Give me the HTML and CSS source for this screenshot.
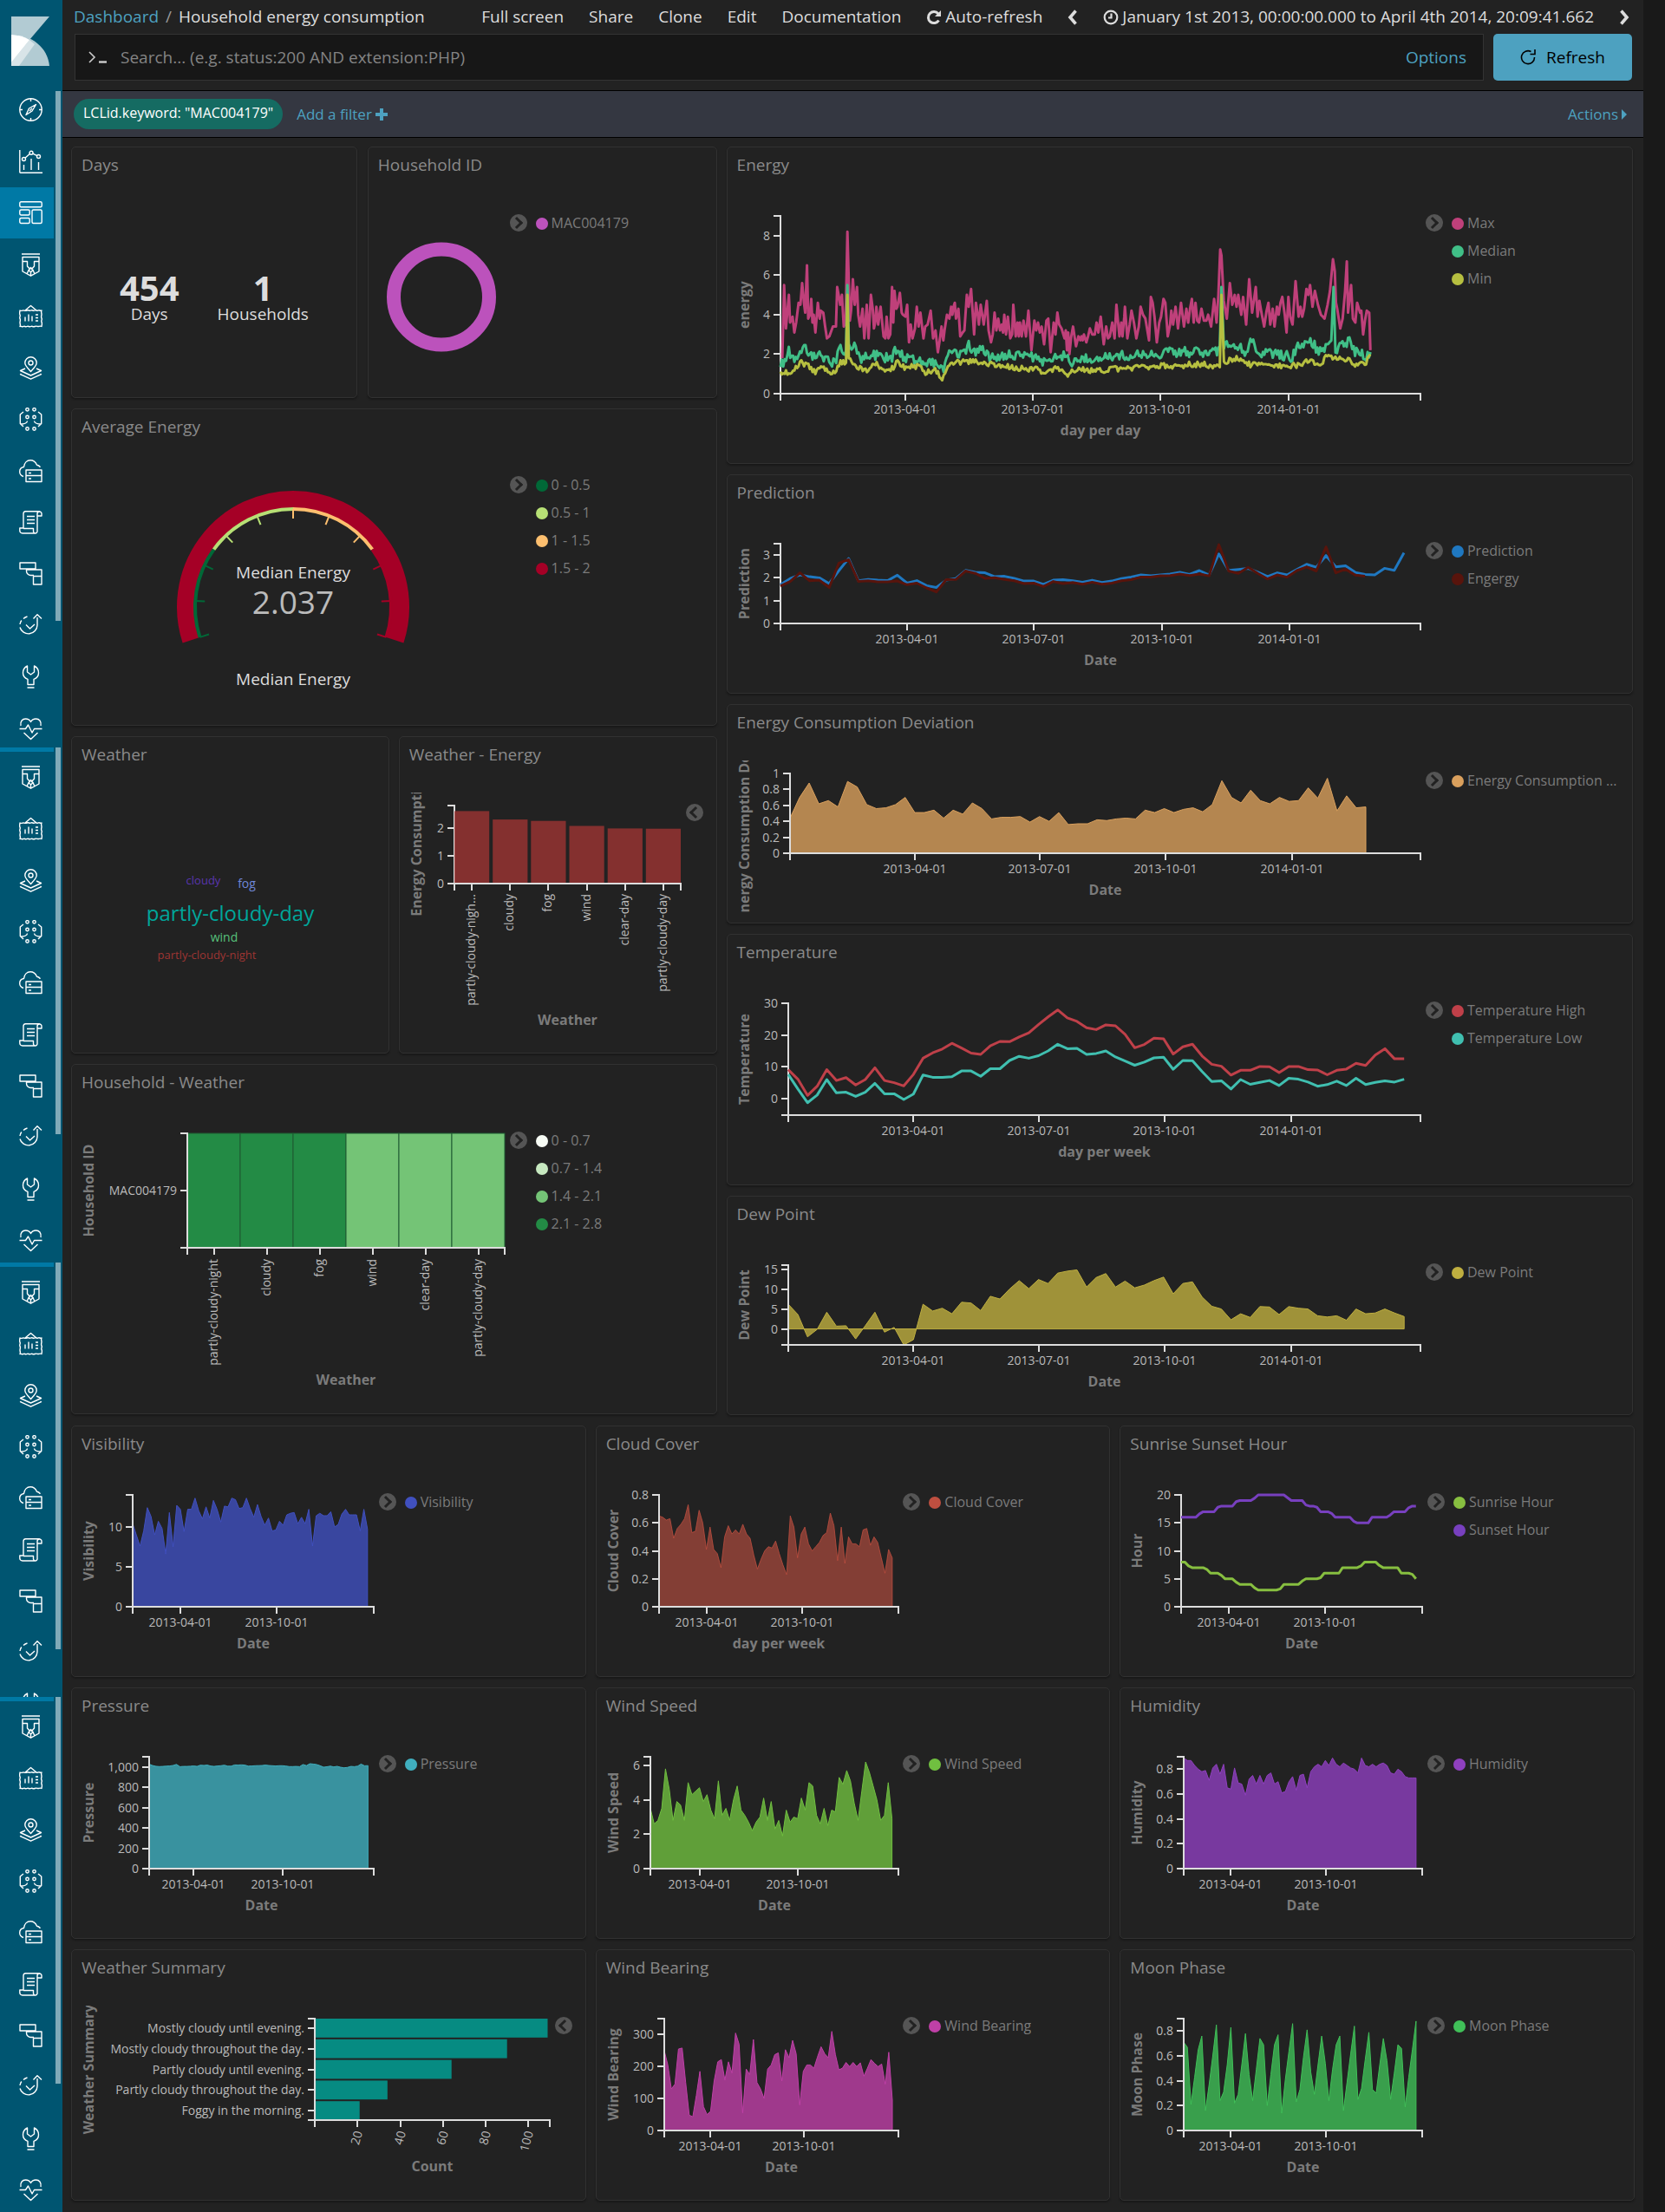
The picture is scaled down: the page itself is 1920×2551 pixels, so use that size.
FILE: index.html
```html
<!DOCTYPE html>
<html lang="en">
<head>
<meta charset="utf-8">
<title>Household energy consumption - Dashboard</title>
<meta name="viewport" content="width=device-width, initial-scale=1">
<link rel="stylesheet" href="styles.css">
</head>
<body>
<svg class="sprite" aria-hidden="true">
  <symbol id="i-discover" viewBox="0 0 27 27"><circle cx="13.5" cy="13.5" r="12.7"/><path d="M13.500 1v3M13.500 23v3M1 13.500h3M23 13.500h3M19.500 7.500l-8 4.500-3.500 7.500 7-4.500zM12 15l3-3"/></symbol>
  <symbol id="i-visualize" viewBox="0 0 27 27"><path d="M.8 0v25.500a.8.8 0 0 0 .8.8H27M5.500 17v6M14 10v13M22.500 14v9M7.200 9l5-4.500M15.800 4.200l5 2.500"/><circle cx="5.500" cy="10.500" r="2"/><circle cx="14" cy="3.300" r="2"/><circle cx="22.500" cy="7.500" r="2"/></symbol>
  <symbol id="i-dashboard" viewBox="0 0 27 27"><rect x=".8" y=".8" width="25.400" height="6" rx="1.500"/><rect x=".8" y="10" width="11.400" height="6" rx="1.500"/><rect x=".8" y="19.500" width="11.400" height="6" rx="1.500"/><rect x="15" y="10" width="11.200" height="15.500" rx="1.500"/></symbol>
  <symbol id="i-timelion" viewBox="0 0 27 27"><path d="M3 1h21M4 4.500h19V21l-9.500 5.200L4 21zM4 9.500h5.500V15l3.500 4M23 9.500h-5.500V15L14 19M13.500 16.500l-2.500 3 2.500 2.500 2.500-2.500zM11 19.500L9 24M16 19.500l2 4.500M13.500 22v4"/></symbol>
  <symbol id="i-canvas" viewBox="0 0 27 27"><path d="M1 7c1.500 1 3 0 4 0s2 1 4 0 3 1 4.500 0 3 1 4.500 0 3 1 4 0 3 1 4 0c-1 1.500 0 3 0 4.500s-1 3 0 4.500-1 3 0 4.500 0 3.500 0 5c-1.500-1-3 0-4 0s-2-1-4 0-3-1-4.500 0-3-1-4.500 0-3-1-4 0-3-1-4 0c1-1.500 0-3 0-4.500s1-3 0-4.500 1-3 0-4.500S1 8.500 1 7zM7 7l6.500-5.500L20 7M7 14.500v5M11 11.500v8M15 13.500v6M19 12h3M19 15.500h3M19 19h3"/></symbol>
  <symbol id="i-maps" viewBox="0 0 27 27"><path d="M13.500 17.500C9 12.500 6.800 10.500 6.800 7.500a6.700 6.700 0 0 1 13.400 0c0 3-2.200 5-6.700 10zM7 14l-5.500 2.500 12 5.500 12-5.500L20 14M2.500 20l-1 .7 12 5.500 12-5.500-1-.7"/><circle cx="13.500" cy="7.500" r="2.500"/></symbol>
  <symbol id="i-ml" viewBox="0 0 27 27"><circle cx="9.500" cy="2.300" r="1.700"/><circle cx="17.500" cy="2.300" r="1.700"/><circle cx="9.500" cy="11" r="1.700"/><circle cx="17.500" cy="11" r="1.700"/><circle cx="9.500" cy="24.500" r="1.700"/><circle cx="17.500" cy="24.500" r="1.700"/><path d="M5 5L1.300 8v10.500L5 22M22 5l3.700 3v10.500L22 22M1.300 19c4 0 8-.5 8.200-3.500M25.700 19c-4 0-8-.5-8.200-3.500"/></symbol>
  <symbol id="i-infra" viewBox="0 0 27 27"><path d="M5 19.500c-3-1-4.300-3-4.300-5.500 0-3 2-5 4.800-5.500C6 4 9 .8 13 .8c3.500 0 6 2 7.500 5.500 2 .2 3 1.200 4 2.500M8 12h18v6.500H8zM8 18.500h18V25.500H8zM11 15.500h3M11 22h3"/></symbol>
  <symbol id="i-logs" viewBox="0 0 27 27"><path d="M5 20V3.500A2.700 2.700 0 0 1 7.500.8H23.500M21 20V3.500a2.500 2.500 0 0 1 5 0V6H21M5 20H.8v3a3 3 0 0 0 3 3H19a2.500 2.500 0 0 1-2.500-3V20.500H5M19 26a2.500 2.500 0 0 0 2-3v-3M9 6.500h9M9 10.500h9M9 14.500h9"/></symbol>
  <symbol id="i-apm" viewBox="0 0 27 27"><path d="M1 1h18v7H1zM8.500 8v2.500a5 5 0 0 0 5 5H17M8.500 9H26v7.500h-9.500M26 16.500V26h-9.500v-9.500"/></symbol>
  <symbol id="i-uptime" viewBox="0 0 27 27"><path d="M8 12.500l4.500 4.500L18 12M21 4v9a10.200 10.200 0 0 1-20 2.500M1 12a10 10 0 0 1 1.800-4.500M5 5.500A10 10 0 0 1 9.500 3M16.500 5.500L21 .8l5 4.700"/></symbol>
  <symbol id="i-dev" viewBox="0 0 27 27"><path d="M9.500 26h8M10 22.500v-6.200C6.500 15 4.500 12.500 4.500 9c0-3.500 2-6.500 5-8v7l4 3 4-3V1c3 1.500 5 4.500 5 8 0 3.500-2 6-5.500 7.300v6.200z"/></symbol>
  <symbol id="i-monitor" viewBox="0 0 27 27"><path d="M.5 13.500h7l3-4.500 4.500 9 2.500-4.500h9M2 10C1 4.500 4 2 7.500 2c3 0 5 1.500 6 3.500 1-2 3-3.500 6-3.500C23 2 26 4.500 25 10M5.500 18l8 7.500 8-7.500"/></symbol>
</svg>

<div class="app">
  <aside class="sidebar">
    <a class="logo" href="#" aria-label="Home">
      <svg viewBox="0 0 44 57"><path fill="#b2cbd3" d="M0 0h44L21 27C15 23 8 21 0 21z"/><path fill="#b2cbd3" d="M0 21c24 0 42 15 44 36H0z"/><path fill="#d8e4e8" d="M21 27l6 5L9 57H0v-4z"/><path fill="#fff" d="M0 21c8 0 15 2 21 6L0 53z"/></svg>
    </a>
    <nav class="strip strip--first" aria-label="Main">
      <ul>
        <li><a href="#" aria-label="Discover"><svg><use href="#i-discover"/></svg></a></li>
        <li><a href="#" aria-label="Visualize"><svg><use href="#i-visualize"/></svg></a></li>
        <li class="active"><a href="#" aria-label="Dashboard"><svg><use href="#i-dashboard"/></svg></a></li>
        <li><a href="#" aria-label="Timelion"><svg><use href="#i-timelion"/></svg></a></li>
        <li><a href="#" aria-label="Canvas"><svg><use href="#i-canvas"/></svg></a></li>
        <li><a href="#" aria-label="Maps"><svg><use href="#i-maps"/></svg></a></li>
        <li><a href="#" aria-label="Machine Learning"><svg><use href="#i-ml"/></svg></a></li>
        <li><a href="#" aria-label="Infrastructure"><svg><use href="#i-infra"/></svg></a></li>
        <li><a href="#" aria-label="Logs"><svg><use href="#i-logs"/></svg></a></li>
        <li><a href="#" aria-label="APM"><svg><use href="#i-apm"/></svg></a></li>
        <li><a href="#" aria-label="Uptime"><svg><use href="#i-uptime"/></svg></a></li>
        <li><a href="#" aria-label="Dev Tools"><svg><use href="#i-dev"/></svg></a></li>
        <li><a href="#" aria-label="Monitoring"><svg><use href="#i-monitor"/></svg></a></li>
      </ul>
      <div class="scrollbar"></div>
    </nav>
    <nav class="strip strip--tall" aria-label="More, first part">
      <ul>
        <li><a href="#" aria-label="Timelion"><svg><use href="#i-timelion"/></svg></a></li>
        <li><a href="#" aria-label="Canvas"><svg><use href="#i-canvas"/></svg></a></li>
        <li><a href="#" aria-label="Maps"><svg><use href="#i-maps"/></svg></a></li>
        <li><a href="#" aria-label="Machine Learning"><svg><use href="#i-ml"/></svg></a></li>
        <li><a href="#" aria-label="Infrastructure"><svg><use href="#i-infra"/></svg></a></li>
        <li><a href="#" aria-label="Logs"><svg><use href="#i-logs"/></svg></a></li>
        <li><a href="#" aria-label="APM"><svg><use href="#i-apm"/></svg></a></li>
        <li><a href="#" aria-label="Uptime"><svg><use href="#i-uptime"/></svg></a></li>
        <li><a href="#" aria-label="Dev Tools"><svg><use href="#i-dev"/></svg></a></li>
        <li><a href="#" aria-label="Monitoring"><svg><use href="#i-monitor"/></svg></a></li>
      </ul>
      <div class="scrollbar"></div>
    </nav>
    <nav class="strip strip--short" aria-label="More, second part">
      <ul>
        <li><a href="#" aria-label="Timelion"><svg><use href="#i-timelion"/></svg></a></li>
        <li><a href="#" aria-label="Canvas"><svg><use href="#i-canvas"/></svg></a></li>
        <li><a href="#" aria-label="Maps"><svg><use href="#i-maps"/></svg></a></li>
        <li><a href="#" aria-label="Machine Learning"><svg><use href="#i-ml"/></svg></a></li>
        <li><a href="#" aria-label="Infrastructure"><svg><use href="#i-infra"/></svg></a></li>
        <li><a href="#" aria-label="Logs"><svg><use href="#i-logs"/></svg></a></li>
        <li><a href="#" aria-label="APM"><svg><use href="#i-apm"/></svg></a></li>
        <li><a href="#" aria-label="Uptime"><svg><use href="#i-uptime"/></svg></a></li>
        <li><a href="#" aria-label="Dev Tools"><svg><use href="#i-dev"/></svg></a></li>
        <li><a href="#" aria-label="Monitoring"><svg><use href="#i-monitor"/></svg></a></li>
      </ul>
      <div class="scrollbar"></div>
    </nav>
    <nav class="strip strip--tall" aria-label="More, third part">
      <ul>
        <li><a href="#" aria-label="Timelion"><svg><use href="#i-timelion"/></svg></a></li>
        <li><a href="#" aria-label="Canvas"><svg><use href="#i-canvas"/></svg></a></li>
        <li><a href="#" aria-label="Maps"><svg><use href="#i-maps"/></svg></a></li>
        <li><a href="#" aria-label="Machine Learning"><svg><use href="#i-ml"/></svg></a></li>
        <li><a href="#" aria-label="Infrastructure"><svg><use href="#i-infra"/></svg></a></li>
        <li><a href="#" aria-label="Logs"><svg><use href="#i-logs"/></svg></a></li>
        <li><a href="#" aria-label="APM"><svg><use href="#i-apm"/></svg></a></li>
        <li><a href="#" aria-label="Uptime"><svg><use href="#i-uptime"/></svg></a></li>
        <li><a href="#" aria-label="Dev Tools"><svg><use href="#i-dev"/></svg></a></li>
        <li><a href="#" aria-label="Monitoring"><svg><use href="#i-monitor"/></svg></a></li>
      </ul>
      <div class="scrollbar"></div>
    </nav>
  </aside>

  <main class="main">
    <header class="topbar">
      <nav class="crumbs" aria-label="Breadcrumb"><a href="#">Dashboard</a><span class="slash">/</span><span>Household energy consumption</span></nav>
      <div class="menu">
        <button type="button">Full screen</button>
        <button type="button">Share</button>
        <button type="button">Clone</button>
        <button type="button">Edit</button>
        <button type="button">Documentation</button>
        <button type="button"><svg class="ico" viewBox="0 0 18 18"><path class="thick" d="M14.500 12.500A6.500 6.500 0 1 1 14 5"/><path fill="currentColor" d="M17 1v7h-7z"/></svg>Auto-refresh</button>
        <button type="button" aria-label="Previous period"><svg class="chev" viewBox="0 0 12 18"><path d="M9.500 1.500L3 9l6.500 7.500"/></svg></button>
        <button type="button" class="range"><svg class="ico" viewBox="0 0 18 18"><circle cx="9" cy="9" r="7.300"/><path d="M9.500 4.500v5H6"/></svg>January 1st 2013, 00:00:00.000 to April 4th 2014, 20:09:41.662</button>
        <button type="button" aria-label="Next period"><svg class="chev" viewBox="0 0 12 18"><path d="M2.500 1.500L9 9l-6.500 7.500"/></svg></button>
      </div>
    </header>

    <form class="query">
      <div class="search">
        <label for="q" class="prompt" aria-label="Query"><svg viewBox="0 0 22 16"><path d="M1 2l6 6-6 6"/><path class="under" d="M12 13.500h9"/></svg></label>
        <input id="q" type="text" placeholder="Search... (e.g. status:200 AND extension:PHP)">
        <a href="#">Options</a>
      </div>
      <button type="submit" class="refresh"><svg viewBox="0 0 18 20"><path d="M12.500 3.500A7.500 7.500 0 1 0 16.500 10M17 1v5.500h-5.500"/></svg>Refresh</button>
    </form>

    <div class="filters">
      <span class="pill">LCLid.keyword: "MAC004179"</span>
      <a href="#" class="add">Add a filter<svg viewBox="0 0 14 14"><path d="M5 0h4v5h5v4H9v5H5V9H0V5h5z"/></svg></a>
      <a href="#" class="actions">Actions<svg viewBox="0 0 6 12"><path d="M0 0l6 6-6 6z"/></svg></a>
    </div>

    <div class="dashboard">
      <div class="top">
        <div class="col">
          <div class="pair pair--narrow">
            <section class="panel u8"><h2>Days</h2>
              <div class="metrics"><div><strong>454</strong>Days</div><div><strong>1</strong>Households</div></div>
            </section>
            <section class="panel u8"><h2>Household ID</h2>
              <div class="body"><div class="chart" data-chart="household"></div>
                <div class="legend"><button type="button" class="toggle" aria-label="Hide legend"></button><ul><li class="s-household">MAC004179</li></ul></div></div>
            </section>
          </div>
          <section class="panel u10"><h2>Average Energy</h2>
            <div class="body"><div class="chart" data-chart="gauge"></div>
              <div class="legend"><button type="button" class="toggle" aria-label="Hide legend"></button><ul><li class="s-g1">0 - 0.5</li><li class="s-g2">0.5 - 1</li><li class="s-g3">1 - 1.5</li><li class="s-g4">1.5 - 2</li></ul></div></div>
          </section>
          <div class="pair">
            <section class="panel u10"><h2>Weather</h2>
              <div class="body"><div class="chart" data-chart="cloud"></div></div>
            </section>
            <section class="panel u10"><h2>Weather - Energy</h2>
              <div class="body"><div class="chart" data-chart="weatherEnergy"></div>
                <div class="legend legend--closed"><button type="button" class="toggle toggle--closed" aria-label="Show legend"></button></div></div>
            </section>
          </div>
          <section class="panel u11"><h2>Household - Weather</h2>
            <div class="body"><div class="chart" data-chart="heatmap"></div>
              <div class="legend"><button type="button" class="toggle" aria-label="Hide legend"></button><ul><li class="s-h1">0 - 0.7</li><li class="s-h2">0.7 - 1.4</li><li class="s-h3">1.4 - 2.1</li><li class="s-h4">2.1 - 2.8</li></ul></div></div>
          </section>
        </div>
        <div class="col">
          <section class="panel u10"><h2>Energy</h2>
            <div class="body"><div class="chart" data-chart="energy"></div>
              <div class="legend"><button type="button" class="toggle" aria-label="Hide legend"></button><ul><li class="s-max">Max</li><li class="s-median">Median</li><li class="s-min">Min</li></ul></div></div>
          </section>
          <section class="panel u7"><h2>Prediction</h2>
            <div class="body"><div class="chart" data-chart="prediction"></div>
              <div class="legend"><button type="button" class="toggle" aria-label="Hide legend"></button><ul><li class="s-prediction">Prediction</li><li class="s-actual">Engergy</li></ul></div></div>
          </section>
          <section class="panel u7"><h2>Energy Consumption Deviation</h2>
            <div class="body"><div class="chart" data-chart="deviation"></div>
              <div class="legend"><button type="button" class="toggle" aria-label="Hide legend"></button><ul><li class="s-deviation">Energy Consumption Deviation</li></ul></div></div>
          </section>
          <section class="panel u8"><h2>Temperature</h2>
            <div class="body"><div class="chart" data-chart="temperature"></div>
              <div class="legend"><button type="button" class="toggle" aria-label="Hide legend"></button><ul><li class="s-high">Temperature High</li><li class="s-low">Temperature Low</li></ul></div></div>
          </section>
          <section class="panel u7"><h2>Dew Point</h2>
            <div class="body"><div class="chart" data-chart="dew"></div>
              <div class="legend"><button type="button" class="toggle" aria-label="Hide legend"></button><ul><li class="s-dew">Dew Point</li></ul></div></div>
          </section>
        </div>
      </div>
      <div class="thirds">
        <section class="panel u8"><h2>Visibility</h2>
          <div class="body"><div class="chart" data-chart="visibility"></div>
            <div class="legend"><button type="button" class="toggle" aria-label="Hide legend"></button><ul><li class="s-visibility">Visibility</li></ul></div></div>
        </section>
        <section class="panel u8"><h2>Cloud Cover</h2>
          <div class="body"><div class="chart" data-chart="cover"></div>
            <div class="legend"><button type="button" class="toggle" aria-label="Hide legend"></button><ul><li class="s-cover">Cloud Cover</li></ul></div></div>
        </section>
        <section class="panel u8"><h2>Sunrise Sunset Hour</h2>
          <div class="body"><div class="chart" data-chart="sun"></div>
            <div class="legend"><button type="button" class="toggle" aria-label="Hide legend"></button><ul><li class="s-sunrise">Sunrise Hour</li><li class="s-sunset">Sunset Hour</li></ul></div></div>
        </section>
        <section class="panel u8"><h2>Pressure</h2>
          <div class="body"><div class="chart" data-chart="pressure"></div>
            <div class="legend"><button type="button" class="toggle" aria-label="Hide legend"></button><ul><li class="s-pressure">Pressure</li></ul></div></div>
        </section>
        <section class="panel u8"><h2>Wind Speed</h2>
          <div class="body"><div class="chart" data-chart="wind"></div>
            <div class="legend"><button type="button" class="toggle" aria-label="Hide legend"></button><ul><li class="s-wind">Wind Speed</li></ul></div></div>
        </section>
        <section class="panel u8"><h2>Humidity</h2>
          <div class="body"><div class="chart" data-chart="humidity"></div>
            <div class="legend"><button type="button" class="toggle" aria-label="Hide legend"></button><ul><li class="s-humidity">Humidity</li></ul></div></div>
        </section>
        <section class="panel u8"><h2>Weather Summary</h2>
          <div class="body"><div class="chart" data-chart="summary"></div>
            <div class="legend legend--closed"><button type="button" class="toggle toggle--closed" aria-label="Show legend"></button></div></div>
        </section>
        <section class="panel u8"><h2>Wind Bearing</h2>
          <div class="body"><div class="chart" data-chart="bearing"></div>
            <div class="legend"><button type="button" class="toggle" aria-label="Hide legend"></button><ul><li class="s-bearing">Wind Bearing</li></ul></div></div>
        </section>
        <section class="panel u8"><h2>Moon Phase</h2>
          <div class="body"><div class="chart" data-chart="moon"></div>
            <div class="legend"><button type="button" class="toggle" aria-label="Hide legend"></button><ul><li class="s-moon">Moon Phase</li></ul></div></div>
        </section>
      </div>
    </div>
  </main>
</div>
<script src="charts.js"></script>
</body>
</html>
```

FILE: styles.css
```css
* { box-sizing: border-box; }

body {
  margin: 0;
  background: #191919;
  color: #ddd;
  font-family: "Open Sans", "Noto Sans", sans-serif;
  font-size: 19px;
}

a { color: #4da1c0; text-decoration: none; }

button {
  margin: 0;
  padding: 0;
  border: 0;
  background: none;
  color: inherit;
  font: inherit;
  cursor: pointer;
}

ul { margin: 0; padding: 0; list-style: none; }

.sprite { display: none; }

.app { display: flex; align-items: stretch; padding-right: 25px; }

/* Sidebar */
.sidebar { flex: none; width: 72px; background: #005571; overflow: hidden; }

.logo { display: block; height: 97px; padding: 19px 0 0 13px; }
.logo svg { display: block; width: 44px; height: 57px; }

.strip { display: flex; gap: 2px; overflow: hidden; }
.strip ul { width: 62px; display: flex; flex-direction: column; flex: none; }
.strip li { flex: 1; }
.strip li.active { background: #0079a5; }
.strip a { display: flex; align-items: center; justify-content: center; height: 100%; padding-left: 9px; }
.strip svg {
  width: 27px;
  height: 27px;
  fill: none;
  stroke: #fff;
  stroke-width: 1.4;
  stroke-linejoin: round;
}

.scrollbar { width: 6px; height: 446px; background: #80aab8; }

.strip--first { height: 765px; }
.strip--first ul { height: 773px; }
.strip--first .scrollbar { height: 611px; margin: 8px 0 0; }

.strip--tall { height: 594px; }
.strip--short { height: 501px; }
.strip--tall ul, .strip--short ul { height: 598px; border-top: 5px solid #0079a5; }

/* Header */
.main { flex: 1; min-width: 0; background: #222; }

.topbar {
  display: flex;
  justify-content: space-between;
  height: 39px;
  padding: 0 16px 0 13px;
  line-height: 39px;
  white-space: nowrap;
}

.slash { margin: 0 8px; color: #999; }

.menu { display: flex; gap: 29px; }
.menu button { display: flex; align-items: center; gap: 4px; }
.menu svg { fill: none; stroke: currentColor; stroke-width: 2.2; }
.menu .ico { width: 18px; height: 18px; }
.menu .thick { stroke-width: 3; }
.menu .ico [fill] { stroke: none; }
.menu .chev { width: 12px; height: 18px; stroke-width: 3.6; }

.query { display: flex; gap: 11px; height: 65px; padding: 0 13px 11px 14px; }

.search {
  flex: 1;
  display: flex;
  align-items: center;
  padding: 0 19px 0 15px;
  border: 1px solid #333;
  background: #171717;
}

.prompt svg { display: block; width: 22px; height: 16px; fill: none; stroke: #ccc; stroke-width: 1.6; }
.prompt .under { stroke-width: 2.4; }

.search input {
  flex: 1;
  min-width: 0;
  height: 100%;
  margin-left: 15px;
  padding: 0;
  border: 0;
  outline: 0;
  background: none;
  color: #ddd;
  font: inherit;
}
.search input::placeholder { color: #848484; opacity: 1; }

.refresh {
  display: flex;
  align-items: center;
  justify-content: center;
  gap: 12px;
  width: 160px;
  border-radius: 5px;
  background: #4da1c0;
  color: #000;
}
.refresh svg { width: 18px; height: 20px; fill: none; stroke: #000; stroke-width: 1.6; }

.filters {
  display: flex;
  align-items: center;
  height: 55px;
  padding: 0 19px 0 13px;
  border: solid #000;
  border-width: 1px 0;
  background: #343741;
  font-size: 17px;
}
.filters a { display: flex; align-items: center; gap: 4px; }
.filters svg { fill: currentColor; }

.pill {
  height: 35px;
  padding: 0 11px;
  border-radius: 18px;
  background: #156b62;
  color: #fff;
  font-size: 16px;
  line-height: 33px;
}
.add { margin-left: 16px; }
.add svg { width: 14px; height: 14px; }
.actions { margin-left: auto; }
.actions svg { width: 6px; height: 12px; }

/* Panel grid */
.dashboard { display: grid; gap: 12px; padding: 10px 10px 11px; }
.top { display: grid; grid-template-columns: 745fr 1046fr; gap: 11px; margin-right: 2px; }
.col { display: grid; gap: 12px; align-content: start; min-width: 0; }
.pair { display: grid; grid-template-columns: 1fr 1fr; gap: 11px; }
.pair--narrow { grid-template-columns: 330fr 403fr; gap: 12px; }
.thirds { display: grid; grid-template-columns: repeat(3, 1fr); gap: 12px 11px; }

.panel {
  display: flex;
  flex-direction: column;
  min-width: 0;
  padding: 0 11px 11px;
  border: 1px solid #313131;
  border-radius: 5px;
  background: #222;
  box-shadow: 0 2px 2px #191919;
}
.u7 { min-height: 253px; }
.u8 { min-height: 290px; }
.u10 { min-height: 366px; }
.u11 { min-height: 404px; }

.panel h2 {
  flex: none;
  height: 64px;
  margin: 0;
  padding-top: 7px;
  color: #8a8a8a;
  font-size: 19px;
  font-weight: 400;
  line-height: 26px;
}

.body { flex: 1; display: flex; min-height: 0; }
.chart { flex: 1; min-width: 0; overflow: hidden; position: relative; }
.chart svg { position: absolute; display: block; }

.metrics {
  flex: 1;
  display: flex;
  align-items: center;
  justify-content: center;
  gap: 44px;
  padding-top: 7px;
  text-align: center;
  line-height: 24px;
}
.metrics strong { display: block; font-size: 40px; line-height: 36px; }

/* Legend */
.legend { flex: none; width: 227px; display: flex; align-items: flex-start; gap: 10px; padding-top: 13px; }
.legend--closed { width: 24px; }
.toggle {
  flex: none;
  display: grid;
  place-items: center;
  width: 20px;
  height: 20px;
  border-radius: 50%;
  background: #555;
}
.toggle::before {
  content: "";
  width: 7px;
  height: 7px;
  margin-right: 3px;
  border: solid #222;
  border-width: 3px 3px 0 0;
  transform: rotate(45deg);
}
.toggle--closed::before { margin: 0 0 0 3px; transform: rotate(225deg); }
.legend ul { display: grid; gap: 12px; min-width: 0; font-size: 16px; line-height: 20px; }
.legend li { overflow: hidden; white-space: nowrap; text-overflow: ellipsis; -webkit-text-fill-color: #7b7b7b; }
.legend li::before {
  content: "";
  display: inline-block;
  width: 14px;
  height: 14px;
  margin-right: 4px;
  border-radius: 50%;
  background: currentColor;
  vertical-align: -2px;
}

/* Charts */
.axis { fill: none; stroke: #ddd; stroke-width: 2; shape-rendering: crispEdges; }
.tick { fill: #bbb; font-size: 14px; }
.title { fill: #7b7b7b; font-size: 16px; font-weight: 700; }
.line { fill: none; stroke: currentColor; stroke-width: 2; stroke-linejoin: round; }
.thin { stroke-width: 1.5; }
.wide { stroke-width: 3; }
.area { fill: currentColor; fill-opacity: .8; stroke: currentColor; stroke-width: 1; }
.s-cover .area, .area.s-cover { fill-opacity: .62; stroke-opacity: .8; }
.bar { fill: currentColor; fill-opacity: .8; }
.fill { fill: currentColor; }
.cell-edge { stroke: #1f5a33; stroke-width: 1; }
.label { fill: #ddd; font-size: 19px; }
.value { fill: #bbb; font-size: 37px; }
.word { fill: currentColor; font-size: 13px; }
.word--main { font-size: 24px; }
.word--mid { font-size: 14px; }

.s-household { color: #bc52bc; }
.s-g1 { color: #006837; }
.s-g2 { color: #b7e075; }
.s-g3 { color: #fdbf6f; }
.s-g4 { color: #a50026; }
.s-h1 { color: #f7fcf5; }
.s-h2 { color: #c7e9c0; }
.s-h3 { color: #74c476; }
.s-h4 { color: #238b45; }
.s-max { color: #bf407a; }
.s-median { color: #40bf87; }
.s-min { color: #b6bf40; }
.s-prediction { color: #1f78c1; }
.s-actual { color: #58140c; }
.s-deviation { color: #daa05d; }
.s-high { color: #bf4049; }
.s-low { color: #40bfb0; }
.s-dew { color: #bfaf40; }
.s-visibility { color: #4050bf; }
.s-cover { color: #bf4f40; }
.s-sunrise { color: #87bf40; }
.s-sunset { color: #7840bf; }
.s-pressure { color: #40afbf; }
.s-wind { color: #70bf40; }
.s-humidity { color: #8f40bf; }
.s-bearing { color: #bf40a7; }
.s-moon { color: #40bf58; }
.s-weather { color: #9e3533; }
.s-summary { color: #00a69b; }
.s-violet { color: #5a35b0; }
.s-blue { color: #6f87d8; }
.s-teal { color: #00a69b; }
.s-green { color: #57c17b; }
.s-red { color: #9e3533; }
```

FILE: charts.js
```javascript
(function () {
  var NS = 'http://www.w3.org/2000/svg';
  var SPAN = 459.84; // days on the time axis

  function el(parent, name, attrs, text) {
    var n = document.createElementNS(NS, name);
    for (var k in attrs) n.setAttribute(k, attrs[k]);
    if (text !== undefined) n.textContent = text;
    parent.appendChild(n);
    return n;
  }

  function r(v) { return Math.round(v * 10) / 10; }

  // [first index, value] steps to one value per week
  function steps(list) {
    var out = [];
    for (var i = 0; i < list.length; i += 2) {
      var end = i + 2 < list.length ? list[i + 2] : 65;
      while (out.length < end) out.push(list[i + 1]);
    }
    return out;
  }

  // Daily series from [position, value] knots; positions run 0..1061 along the axis
  function daily(knots, noise, seed) {
    var out = [], k = 0;
    for (var d = 0; d * 2.312 <= 978; d++) {
      var x = d * 2.312;
      while (k + 2 < knots.length - 2 && knots[k + 2] < x) k += 2;
      var x0 = knots[k], y0 = knots[k + 1], x1 = knots[k + 2], y1 = knots[k + 3];
      var t = Math.max(0, Math.min(1, (x - x0) / (x1 - x0)));
      var n = Math.sin(d * 12.9898 + seed) * 43758.5453;
      n = (n - Math.floor(n)) * 2 - 1;
      out.push([x / 1061, y0 + (y1 - y0) * t + n * noise]);
    }
    return out;
  }

  function exact(knots) {
    var out = [];
    for (var i = 0; i < knots.length; i += 2) out.push([knots[i] / 1061, knots[i + 1]]);
    return out;
  }

  function spiky(knots, noise, seed, peaks) {
    var s = daily(knots, noise, seed);
    peaks.forEach(function (p) {
      s = s.filter(function (q) { return Math.abs(q[0] * 1061 - p[0]) > 2.2; });
      s.push([p[0] / 1061, p[1]]);
    });
    return s.sort(function (a, b) { return a[0] - b[0]; });
  }

  var maxKnots = [3,1.8,6,5.5,9,3.3,11,4,14,5,16,3.6,20,3.9,23,3.1,26,3.6,30,4.6,33,4.5,36,5.6,39,4.6,41,4.1,44,6.5,46,3.8,49,4,51,4.8,53,3.6,55,4,58,3.1,62,4.6,65,3.8,67,4.2,71,4.1,74,3.4,77,2.8,81,2.9,87,3.4,92,3.4,94,5.4,97,4.9,99,4.5,102,5,105,3.4,108,3.6,111,8.2,115,3.7,117,4.2,120,5.8,123,4.5,127,5.4,129,4,132,3.4,136,4.3,139,2.8,143,4.5,146,2.8,150,5,153,4.3,155,3.3,157,3.6,159,4.4,162,3.5,166,4.4,171,2.9,174,2.8,176,3.9,179,2.8,182,3,185,5.4,187,3.6,189,5.2,192,4.3,194,4.4,198,5.1,201,4.1,203,4,207,3.9,210,4.5,213,2.6,216,3.5,219,2.8,223,3.3,226,4.4,229,3.4,232,4.1,237,2.8,240,3.4,244,3.5,249,4.2,253,2.8,257,3.2,261,2.1,264,2.7,267,3.4,270,2.7,272,3.2,276,4,280,3.8,283,4.4,285,4,287,4.4,289,4.6,291,3.8,295,4.3,298,2.9,302,3.1,305,3.2,309,5,312,4.4,316,5.3,321,3,324,4.6,327,4,329,3.5,332,4.5,337,3.5,342,4.7,345,3.2,349,2.6,352,3,355,4.1,358,3.2,361,3.8,364,3.2,367,3.5,369,3.1,371,4,374,3,377,3.9,381,2.8,384,3,386,4.5,390,2.9,393,3.6,395,2.9,397,3.6,400,2.9,403,3.7,407,2.9,411,4.2,416,2.2,421,3.7,424,3.2,427,3.6,430,3.1,433,3.4,437,2.5,441,3.7,444,3.8,448,2.1,453,3.6,456,3,459,4.1,462,3.5,466,3.3,471,2.8,473,3.2,475,2.2,477,3.1,479,2,482,2.9,485,3.4,490,2.4,494,2.9,497,2.7,499,2.9,501,2.7,503,3,507,2.6,510,2.9,513,3.3,517,3,521,3,524,3.6,527,3.1,531,3.9,536,2.5,540,3.4,543,2.8,546,2.9,550,3.6,554,2.8,557,4.5,562,2.9,565,3.6,567,2.9,570,3.9,571,4.4,575,2.8,579,3.5,582,4.2,586,3.6,590,2.8,594,3.4,597,4.4,601,4,605,3.8,611,2.7,614,4.9,617,4.6,620,3.9,624,2.6,628,3.6,631,3.9,635,4.8,638,4.6,642,2.9,646,3.5,648,4.2,651,3.5,655,4.4,659,3.3,664,4.6,669,3.4,673,4.3,676,3.6,679,4.3,682,4.8,685,3.6,688,4.6,691,3.7,694,3.6,698,4.3,702,3.7,706,3.7,709,4,714,3.4,719,4.8,723,3.6,726,5,729,7.3,731,7,735,4.7,740,3.8,745,5.6,749,4.5,753,5,756,4.4,759,5,764,4,767,4.9,772,3.5,777,5.8,782,4.1,788,5.4,791,3.9,794,4.7,798,4,802,3.4,806,4.2,809,4.6,812,3.5,816,4.3,819,3.4,823,4.4,826,4,829,4.6,832,4.9,836,4,839,3.1,842,4.9,845,3.9,849,3.5,854,5.7,859,3.9,862,4.4,865,3.9,868,4.3,872,5.3,875,5,878,5.5,882,4.4,886,5.2,891,4.5,896,4,902,3.8,907,4.5,911,5.2,916,6.8,919,6.2,921,4.6,923,4.3,928,3.3,932,3.8,936,5.2,939,6.7,941,4.1,946,5.5,949,3.8,953,3.6,956,4.6,961,4.1,963,4.2,966,3,969,3.7,972,4.2,976,4.1,978,2.2];
  var medianKnots = [0,1.5,6,1.6,13,2.2,20,1.8,30,1.9,38,2.4,52,1.9,60,1.8,68,2,80,1.6,92,1.6,96,2.4,105,2,117,2.4,122,2.4,130,1.8,140,1.8,160,2,185,1.7,191,2.3,205,1.8,215,1.8,240,1.6,262,1.5,268,1.2,272,1.3,276,2,290,2,300,1.9,312,2.5,320,2.1,335,2.2,350,1.8,380,2,420,1.8,440,1.6,450,1.6,462,2.1,480,1.6,520,1.8,560,1.9,600,2,660,2.1,700,2.1,724,2.1,738,2.4,762,2.4,772,1.9,780,2.6,800,2,830,2,848,1.8,858,2.4,880,2.6,895,2.1,915,2.6,922,2.2,945,2.7,953,2.1,970,1.9,978,2.1];
  var minKnots = [0,1,20,1.1,35,1.6,45,1.4,55,1.1,70,1.3,92,1,98,1.6,105,1.6,117,1.7,130,1.3,145,1.2,160,1.5,180,1.1,195,1.6,205,1.3,225,1.4,240,1.1,256,1.2,262,1.1,268,.55,273,1.1,277,1.5,300,1.6,320,1.6,350,1.5,390,1.3,430,1.2,440,1,460,1.3,475,1,490,1.2,530,1.2,580,1.3,640,1.4,700,1.5,722,1.3,738,1.6,755,1.8,775,1.5,800,1.4,850,1.4,880,1.7,895,1.4,905,1.9,925,1.8,945,1.7,955,1.4,970,1.5,978,2.1];

  var charts = {
    energy: {
      left: 50, min: 0, max: 9, y: [0, 2, 4, 6, 8], yTitle: 'energy', xTitle: 'day per day', start: 0,
      lines: [
        { cls: 's-max', points: exact(maxKnots) },
        { cls: 's-median', points: spiky(medianKnots, .26, 3, [[111, 5.5], [731, 5.4], [917, 5.4]]) },
        { cls: 's-min', points: spiky(minKnots, .15, 8, [[111, 5], [731, 5]]) }
      ]
    },
    prediction: {
      left: 50, min: 0, max: 3.5, y: [0, 1, 2, 3], yTitle: 'Prediction', xTitle: 'Date',
      lines: [
        { cls: 's-prediction', data: [1.7,1.97,2.13,2.05,2,1.75,2.32,2.85,1.87,1.93,1.9,1.88,2.12,1.77,1.88,1.66,1.58,1.9,1.97,2.33,2.25,2.22,2.05,2.07,1.98,1.86,1.86,1.72,1.9,1.92,1.87,1.81,1.9,1.8,1.86,1.97,2.04,2.13,2.09,2.13,2.17,2.25,2.15,2.32,2.13,3.05,2.33,2.37,2.42,2.25,2.06,2.22,2.13,2.37,2.6,2.47,2.98,2.48,2.53,2.24,2.15,2.13,2.42,2.33,3.1] },
        { cls: 's-actual', data: [1.64,1.84,2.22,1.87,1.9,1.58,2.65,2.8,1.84,1.87,1.83,1.83,1.86,1.7,1.77,1.56,1.38,1.92,1.93,2.3,2.2,1.98,2.01,1.93,1.87,1.75,1.77,1.62,1.84,1.75,1.8,1.72,1.81,1.72,1.77,1.87,1.92,2.04,2.03,2.09,2.1,2.17,2.1,2.17,2.09,3.46,2.3,2.2,2.46,2.2,1.95,2.13,2.03,2.32,2.48,2.3,3.36,2.22,2.38,2.12,2.07] }
      ]
    },
    deviation: {
      left: 61, min: 0, max: 1, y: [0, .2, .4, .6, .8, 1], yTitle: 'Energy Consumption Deviation', xTitle: 'Date',
      areas: [{ cls: 's-deviation', data: [.44,.7,.88,.62,.66,.58,.9,.83,.61,.56,.57,.61,.7,.51,.51,.54,.44,.54,.49,.63,.56,.43,.45,.45,.46,.39,.46,.4,.51,.36,.37,.37,.42,.41,.43,.44,.43,.54,.51,.56,.51,.55,.57,.52,.61,.91,.7,.63,.79,.66,.62,.7,.65,.66,.82,.69,.94,.53,.72,.57,.58] }]
    },
    temperature: {
      left: 59, min: -5.2, max: 30, y: [0, 10, 20, 30], yTitle: 'Temperature', xTitle: 'day per week',
      lines: [
        { cls: 's-high', data: [9.1,6.1,1,3.9,9.1,5.7,6.6,4.3,6,9.7,5.7,5,4,7.6,12.7,14.4,15.6,17.4,15.9,14.3,13.9,16.6,18,17.9,19.4,20.7,23.3,25.7,27.9,25.4,24.3,22.3,21.7,23.2,22.9,20.2,16,17,19,18.8,14,16.3,17.1,13.4,10.8,10.2,7.4,8.9,8.9,10.1,10,8.2,10.1,10.1,9.1,9,7.5,8.9,9.3,11.1,10.4,13.7,15.7,12.5,12.5] },
        { cls: 's-low', data: [7.6,3,-1.3,1.1,6,1.8,2,.7,2,4.8,1.5,1.5,-.3,1.4,7.4,6.7,6.7,6.9,8.7,8.7,7,9.4,9.4,12,13.3,12.7,13.5,15,17.1,15.7,15.8,13.9,14.2,15,13.1,11.8,10.5,11.5,12.8,13,9.2,12,11.9,8.5,5.4,5.6,3,6,4.5,5.1,5.7,4.1,6.4,6.1,5.2,3.9,4.4,5.5,4.1,6.4,4.4,5.1,5.6,5.2,6.1] }
      ]
    },
    dew: {
      left: 59, min: -4, max: 16, y: [0, 5, 10, 15], yTitle: 'Dew Point', xTitle: 'Date',
      areas: [{ cls: 's-dew', data: [6.2,3.6,-2,-.1,4.2,.7,.8,-2.5,.8,4.2,-.8,.4,-4,-2.7,6.2,4.5,5.2,3.8,6.7,6.5,4.6,8.2,7.5,10,12.1,10.1,12.4,11.4,14,14.5,14.8,10.5,12.9,13.9,10.5,12,10.3,11,12.1,13,8.8,11.4,11.8,8,5.7,5,2.3,3.8,2.9,5.6,5.5,3.6,5.6,5.2,5,3.3,3,3.3,2.2,5,3.8,4,5,4,3.1] }]
    },
    visibility: {
      left: 59, min: 0, max: 14, y: [0, 5, 10], yTitle: 'Visibility', xTitle: 'Date', sparse: true,
      areas: [{ cls: 's-visibility', data: [10.4,9,7.6,9.5,12.4,11.3,9,10.7,9.8,6.6,11.8,7.5,12.7,12.2,9.4,12.2,12.2,13.6,12,11,12.5,11.1,13.3,12.2,10.6,12.6,12.5,13.6,13.4,12.3,12.4,13.6,12.3,11.2,12.8,11.3,10.2,11.1,9.5,9.6,10.7,10.2,11.5,11.7,11.8,10.4,11.2,10.4,12.2,7.6,11.4,11.7,11.4,11.4,11.9,10,10.3,11.6,12.2,11.5,11.5,11.5,9.5,12.2,9.7] }]
    },
    cover: {
      left: 61, min: 0, max: .8, y: [0, .2, .4, .6, .8], yTitle: 'Cloud Cover', xTitle: 'day per week', sparse: true,
      areas: [{ cls: 's-cover', data: [.65,.64,.62,.63,.49,.56,.59,.63,.73,.53,.54,.69,.6,.41,.57,.41,.38,.28,.5,.58,.52,.55,.52,.59,.52,.49,.37,.27,.34,.4,.43,.42,.47,.38,.3,.23,.65,.57,.35,.52,.57,.45,.4,.43,.46,.51,.53,.67,.58,.33,.57,.31,.5,.45,.45,.43,.55,.56,.44,.5,.46,.35,.24,.41,.35] }]
    },
    sun: {
      left: 59, min: 0, max: 20, y: [0, 5, 10, 15, 20], yTitle: 'Hour', xTitle: 'Date', sparse: true,
      lines: [
        { cls: 's-sunrise', data: steps([0,8,2,7.3,3,7,7,6.7,8,6,11,5.6,12,5,15,4.4,16,4,20,3.4,21,3,27,3.2,28,4,33,4.6,34,5,38,5.2,39,6,44,7,49,7.3,50,8,54,7.4,55,7,60,6,63,5.8,64,5]) },
        { cls: 's-sunset', data: steps([0,16,5,16.6,6,17,10,17.8,11,18,15,18.8,16,19,20,19.4,21,20,29,19.5,30,19,34,18.2,35,18,37,17.8,38,17,41,16.7,42,16,47,15.3,48,15,52,16,57,16.4,58,17,62,17.7,63,18]) }
      ]
    },
    pressure: {
      left: 78, min: 0, max: 1100, y: [0, 200, 400, 600, 800, 1000], yTitle: 'Pressure', xTitle: 'Date', sparse: true,
      areas: [{ cls: 's-pressure', data: [1028,1014,1006,1004,1005,1008,1010,1015,1025,1003,1005,1005,1007,1010,1005,1017,1015,1018,1009,1005,1010,1012,1017,1008,1008,1020,1019,1021,1018,1008,1010,1012,1013,1014,1018,1014,1012,1010,1012,1012,1009,1004,1004,1005,1003,1024,1013,1032,1028,1023,1012,998,1002,1008,1000,1006,997,992,995,1005,1003,1008,1028,1011,1013] }]
    },
    wind: {
      left: 51, min: 0, max: 6.5, y: [0, 2, 4, 6], yTitle: 'Wind Speed', xTitle: 'Date', sparse: true,
      areas: [{ cls: 's-wind', data: [3.5,2.6,2.8,3.5,5.8,4.6,2.8,3.9,3.7,2.8,5,4.3,4.5,4.7,3.9,4.3,3.4,2.9,5.1,3.1,3.5,2.8,4,4.8,3.4,3.1,2.7,2.2,2.7,3,4.1,2.8,3.9,2.3,2.8,1.9,3.4,2.7,3,2.9,4.1,3.4,5,4.8,3.1,2.6,3.5,2.5,3.4,3.3,5.3,4.9,5.7,5.1,3.8,2.8,4.5,6.2,5.6,4.8,4,2.8,3.1,5,2.9] }]
    },
    humidity: {
      left: 62, min: 0, max: .9, y: [0, .2, .4, .6, .8], yTitle: 'Humidity', xTitle: 'Date', sparse: true,
      areas: [{ cls: 's-humidity', data: [.89,.87,.87,.83,.8,.78,.79,.71,.81,.84,.76,.84,.65,.64,.81,.69,.68,.59,.72,.75,.68,.75,.68,.75,.77,.68,.7,.61,.62,.7,.74,.63,.75,.76,.65,.78,.82,.84,.82,.87,.83,.89,.84,.82,.85,.83,.81,.8,.77,.89,.83,.82,.84,.82,.84,.85,.83,.77,.76,.8,.78,.74,.73,.73,.73] }]
    },
    bearing: {
      left: 67, min: 0, max: 350, y: [0, 100, 200, 300], yTitle: 'Wind Bearing', xTitle: 'Date', sparse: true,
      areas: [{ cls: 's-bearing', data: [250,205,130,145,255,258,150,48,43,110,185,75,50,60,155,215,222,158,215,180,305,270,55,192,175,285,150,130,100,192,205,237,243,155,253,228,282,240,80,185,205,205,195,230,262,240,228,310,238,190,195,213,200,213,200,212,170,195,222,210,200,208,145,245,95] }]
    },
    moon: {
      left: 62, min: 0, max: .9, y: [0, .2, .4, .6, .8], yTitle: 'Moon Phase', xTitle: 'Date', sparse: true,
      areas: [{ cls: 's-moon', data: [.71,.67,.21,.43,.65,.76,.16,.37,.6,.85,.24,.31,.53,.83,.22,.29,.53,.78,.45,.24,.49,.74,.69,.2,.45,.69,.77,.14,.41,.64,.86,.23,.33,.59,.81,.47,.29,.53,.76,.54,.24,.49,.69,.76,.16,.39,.62,.84,.25,.34,.57,.79,.33,.3,.53,.74,.56,.25,.46,.69,.66,.19,.43,.65,.88] }]
    }
  };

  function axes(svg, b, spec) {
    var mid = (b.top + b.bottom) / 2;
    el(svg, 'path', { 'class': 'axis', d: 'M' + (b.left - 8) + ' ' + b.top + 'H' + b.left + 'V' + b.bottom + 'H' + (b.left - 8) });
    el(svg, 'path', { 'class': 'axis', d: 'M' + b.left + ' ' + (b.bottom + 8) + 'V' + b.bottom + 'H' + b.right + 'V' + (b.bottom + 8) });
    el(svg, 'text', { 'class': 'title', 'text-anchor': 'middle', transform: 'translate(14 ' + mid + ') rotate(-90)' }, spec.yTitle);
    el(svg, 'text', { 'class': 'title', 'text-anchor': 'middle', x: (b.left + b.right) / 2, y: b.bottom + (spec.titleGap || 48) }, spec.xTitle);
  }

  function yTick(svg, b, y, label) {
    el(svg, 'path', { 'class': 'axis thin', d: 'M' + (b.left - 8) + ' ' + y + 'h8' });
    el(svg, 'text', { 'class': 'tick', 'text-anchor': 'end', x: b.left - 12, y: y + 5 }, label);
  }

  function xTick(svg, b, x) {
    el(svg, 'path', { 'class': 'axis thin', d: 'M' + x + ' ' + b.bottom + 'v8' });
  }

  function timeChart(svg, w, h, spec) {
    var b = { left: spec.left, right: w - 6, top: 15, bottom: h - 69 };
    var sx = function (t) { return r(b.left + t * (b.right - b.left)); };
    var sy = function (v) { return r(b.bottom - (v - spec.min) / (spec.max - spec.min) * (b.bottom - b.top)); };
    var weekly = function (data) { return data.map(function (v, i) { return [i * 7 / SPAN, v]; }); };
    var path = function (pts) { return pts.map(function (p) { return sx(p[0]) + ' ' + sy(p[1]); }).join('L'); };

    (spec.areas || []).forEach(function (s) {
      var pts = weekly(s.data), last = pts[pts.length - 1][0];
      el(svg, 'path', { 'class': 'area ' + s.cls, d: 'M' + sx(0) + ' ' + sy(0) + 'L' + path(pts) + 'L' + sx(last) + ' ' + sy(0) + 'Z' });
    });
    axes(svg, b, spec);
    spec.y.forEach(function (v) { yTick(svg, b, Math.round(sy(v)), v.toLocaleString('en-US')); });
    [['2013-04-01', 90], ['2013-07-01', 181], ['2013-10-01', 273], ['2014-01-01', 365]].forEach(function (t, i) {
      if (spec.sparse && i % 2) return;
      var x = Math.round(sx((t[1] + (spec.start === 0 ? 0 : 1)) / SPAN));
      xTick(svg, b, x);
      el(svg, 'text', { 'class': 'tick', 'text-anchor': 'middle', x: x, y: b.bottom + 23 }, t[0]);
    });
    (spec.lines || []).forEach(function (s) {
      el(svg, 'path', { 'class': 'line wide ' + s.cls, d: 'M' + path(s.points || weekly(s.data)) });
    });
  }

  function donut(svg, w, h) {
    el(svg, 'circle', { 'class': 'line s-household', cx: w / 2 - 3, cy: h / 2 + 2, r: 55, style: 'stroke-width:16' });
  }

  function polar(cx, cy, rad, deg) {
    var a = deg * Math.PI / 180;
    return r(cx + rad * Math.sin(a)) + ' ' + r(cy - rad * Math.cos(a));
  }

  function arc(svg, cls, cx, cy, rad, width, from, to) {
    el(svg, 'path', { 'class': 'line ' + cls, style: 'stroke-width:' + width,
      d: 'M' + polar(cx, cy, rad, from) + 'A' + rad + ' ' + rad + ' 0 ' + (to - from > 180 ? 1 : 0) + ' 1 ' + polar(cx, cy, rad, to) });
  }

  function gauge(svg, w) {
    var cx = w / 2 - 3, cy = 164;
    arc(svg, 's-g4', cx, cy, 124, 20, -108, 108);
    [['s-g1', -108], ['s-g2', -54], ['s-g3', 0], ['s-g4', 54]].forEach(function (s) {
      arc(svg, s[0], cx, cy, 113, 4, s[1], s[1] + 54);
    });
    for (var i = 0; i < 11; i++) {
      var a = -108 + i * 21.6;
      var cls = i < 3 ? 's-g1' : i < 5 ? 's-g2' : i < 8 ? 's-g3' : 's-g4';
      el(svg, 'path', { 'class': 'line ' + cls, d: 'M' + polar(cx, cy, 113, a) + 'L' + polar(cx, cy, 102, a) });
    }
    el(svg, 'text', { 'class': 'label', 'text-anchor': 'middle', x: cx, y: 131 }, 'Median Energy');
    el(svg, 'text', { 'class': 'value', 'text-anchor': 'middle', x: cx, y: 172 }, '2.037');
    el(svg, 'text', { 'class': 'label', 'text-anchor': 'middle', x: cx, y: 254 }, 'Median Energy');
  }

  function wordCloud(svg, w) {
    [['cloudy', -31, 106, 's-violet'], ['fog', 19, 110, 's-blue word--mid'], ['partly-cloudy-day', 0, 148, 's-teal word--main'],
      ['wind', -7, 172, 's-green word--mid'], ['partly-cloudy-night', -27, 192, 's-red']].forEach(function (t) {
      el(svg, 'text', { 'class': 'word ' + t[3], 'text-anchor': 'middle', x: w / 2 + t[1], y: t[2] }, t[0]);
    });
  }

  function downLabel(svg, x, y, text, angle) {
    el(svg, 'text', { 'class': 'tick', 'text-anchor': 'end', transform: 'translate(' + x + ' ' + y + ') rotate(' + angle + ')' }, text);
  }

  function weatherEnergy(svg, w, h) {
    var b = { left: 52, right: w - 6, top: 15, bottom: h - 184 };
    var step = (b.right - b.left + 4) / 6, unit = (b.bottom - b.top) / 2.8;
    axes(svg, b, { yTitle: 'Energy Consumption', xTitle: 'Weather', titleGap: 163 });
    [['partly-cloudy-nigh...', 2.6], ['cloudy', 2.3], ['fog', 2.25], ['wind', 2.07], ['clear-day', 1.98], ['partly-cloudy-day', 1.97]].forEach(function (d, i) {
      var x = b.left + i * step, bar = d[1] * unit;
      el(svg, 'rect', { 'class': 'bar s-weather', x: r(x), y: r(b.bottom - bar), width: r(step - 4), height: r(bar - 1) });
      var c = Math.round(x + step / 2 - 2);
      xTick(svg, b, c);
      downLabel(svg, c + 4, b.bottom + 12, d[0], -90);
    });
    [0, 1, 2].forEach(function (v) { yTick(svg, b, Math.round(b.bottom - v * unit), v); });
  }

  function heatmap(svg, w, h) {
    var b = { left: 122, right: w - 6, top: 15, bottom: h - 180 };
    var step = (b.right - b.left) / 6;
    ['partly-cloudy-night', 'cloudy', 'fog', 'wind', 'clear-day', 'partly-cloudy-day'].forEach(function (t, i) {
      el(svg, 'rect', { 'class': 'fill cell-edge ' + (i < 3 ? 's-h4' : 's-h3'), x: r(b.left + i * step), y: b.top, width: r(step), height: b.bottom - b.top });
      var c = Math.round(b.left + (i + .5) * step);
      xTick(svg, b, c);
      downLabel(svg, c + 4, b.bottom + 13, t, -90);
    });
    axes(svg, b, { yTitle: 'Household ID', xTitle: 'Weather', titleGap: 158 });
    yTick(svg, b, Math.round((b.top + b.bottom) / 2), 'MAC004179');
  }

  function summary(svg, w, h) {
    var b = { left: 269, right: w - 6, top: 15, bottom: h - 81 };
    var step = (b.bottom - b.top + 2) / 5, unit = (b.right - b.left) / 110;
    [['Mostly cloudy until evening.', 109], ['Mostly cloudy throughout the day.', 90], ['Partly cloudy until evening.', 64],
      ['Partly cloudy throughout the day.', 34], ['Foggy in the morning.', 21]].forEach(function (d, i) {
      var y = b.top + i * step;
      el(svg, 'rect', { 'class': 'bar s-summary', x: b.left, y: r(y), width: r(d[1] * unit), height: r(step - 2) });
      yTick(svg, b, Math.round(y + step / 2 - 1), d[0]);
    });
    axes(svg, b, { yTitle: 'Weather Summary', xTitle: 'Count', titleGap: 59 });
    [20, 40, 60, 80, 100].forEach(function (v) {
      var x = Math.round(b.left + v * unit);
      xTick(svg, b, x);
      downLabel(svg, x + 6, b.bottom + 14, v, -75);
    });
  }

  var special = { household: donut, gauge: gauge, cloud: wordCloud, weatherEnergy: weatherEnergy, heatmap: heatmap, summary: summary };

  function draw() {
    document.querySelectorAll('.chart').forEach(function (box) {
      var w = box.clientWidth, h = box.clientHeight, name = box.dataset.chart;
      box.textContent = '';
      var svg = el(box, 'svg', { width: w, height: h, role: 'img' });
      if (special[name]) special[name](svg, w, h);
      else timeChart(svg, w, h, charts[name]);
    });
  }

  draw();
  window.addEventListener('resize', draw);
})();
```
